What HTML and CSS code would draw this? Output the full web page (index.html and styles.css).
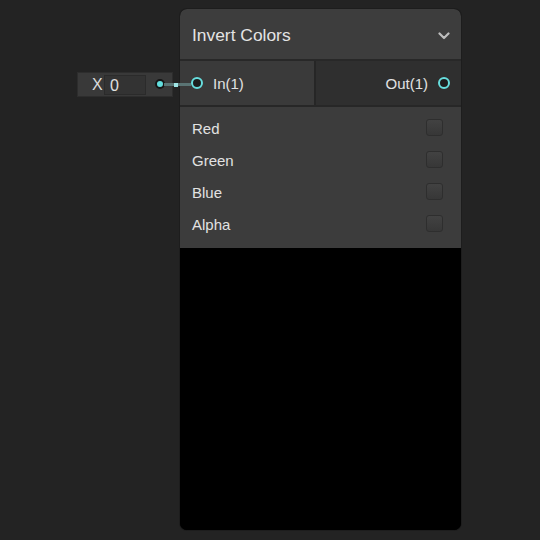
FILE: index.html
```html
<!DOCTYPE html>
<html>
<head>
<meta charset="utf-8">
<link rel="stylesheet" href="styles.css">
</head>
<body>
<div class="canvas">
  <div class="value-node">
    <span class="axis">X</span>
    <span class="field">0</span>
    <span class="out-dot"></span>
  </div>
  <div class="node">
    <div class="header">
      <span class="title">Invert Colors</span>
      <svg class="chevron" width="12" height="8" viewBox="0 0 12 8"><path d="M1.5 1.5 L6 6 L10.5 1.5" fill="none" stroke="#bdbdbd" stroke-width="2.2" stroke-linecap="round" stroke-linejoin="round"/></svg>
    </div>
    <div class="ports">
      <div class="port-in"><span class="ring"></span><span>In(1)</span></div>
      <div class="port-out"><span>Out(1)</span><span class="ring"></span></div>
    </div>
    <div class="options">
      <div class="opt"><span>Red</span><span class="check"></span></div>
      <div class="opt"><span>Green</span><span class="check"></span></div>
      <div class="opt"><span>Blue</span><span class="check"></span></div>
      <div class="opt"><span>Alpha</span><span class="check"></span></div>
    </div>
    <div class="preview"></div>
  </div>
  <div class="wire"><span class="wire-knot"></span></div>
</div>
</body>
</html>
```
FILE: styles.css
```css
html, body {
  margin: 0;
  padding: 0;
  background: #232323;
}
.canvas {
  position: relative;
  width: 540px;
  height: 540px;
  overflow: hidden;
  background: #232323;
  font-family: "Liberation Sans", Arial, sans-serif;
  color: #e2e2e2;
}
.value-node {
  position: absolute;
  left: 77px;
  top: 72px;
  width: 96px;
  height: 25px;
  box-sizing: border-box;
  background: #393939;
  border: 1px solid #2d2d2d;
  display: flex;
  align-items: center;
  font-size: 16px;
}
.axis {
  margin-left: 14px;
  width: 11px;
  color: #dcdcdc;
}
.field {
  margin-left: 1px;
  width: 42px;
  height: 20px;
  box-sizing: border-box;
  background: #333333;
  border: 1px solid #2b2b2b;
  padding-left: 5px;
  line-height: 20px;
  color: #e0e0e0;
}
.out-dot {
  position: absolute;
  left: 77px;
  top: 6px;
  width: 6px;
  height: 6px;
  border-radius: 50%;
  background: #62dede;
  border: 2px solid #161616;
}
.wire {
  position: absolute;
  z-index: 2;
  left: 164px;
  top: 83px;
  width: 27px;
  height: 3px;
  background: #5a7474;
}
.wire-knot {
  position: absolute;
  left: 10px;
  top: -0.5px;
  width: 4px;
  height: 4px;
  background: #9fe6e6;
}
.node {
  position: absolute;
  left: 180px;
  top: 9px;
  width: 281px;
  height: 521px;
  border-radius: 7px;
  overflow: hidden;
  display: flex;
  flex-direction: column;
  background: #000;
  box-shadow: 0 0 0 1px #1d1d1d;
}
.header {
  height: 50px;
  flex: none;
  background: #3d3d3d;
  border-bottom: 2px solid #282828;
  display: flex;
  align-items: center;
  justify-content: space-between;
  padding: 0 11px 0 12px;
}
.title {
  font-size: 17.4px;
  color: #e4e4e4;
  margin-top: 2px;
}
.chevron {
  margin-top: 3px;
}
.ports {
  height: 44px;
  flex: none;
  display: flex;
  border-bottom: 2px solid #272727;
  font-size: 15px;
}
.port-in {
  width: 136px;
  background: #3a3a3a;
  border-right: 2px solid #262626;
  display: flex;
  align-items: center;
  gap: 10px;
  padding-left: 11px;
  box-sizing: border-box;
}
.port-out {
  flex: 1;
  background: #2f2f2f;
  display: flex;
  align-items: center;
  justify-content: flex-end;
  gap: 10px;
  padding-right: 11px;
}
.ring {
  width: 8px;
  height: 8px;
  border-radius: 50%;
  border: 2px solid #67dede;
  background: #1e1e1e;
}
.options {
  flex: none;
  height: 141px;
  box-sizing: border-box;
  background: #3c3c3c;
  padding: 5px 18px 8px 12px;
  font-size: 15px;
}
.opt {
  height: 32px;
  display: flex;
  align-items: center;
  justify-content: space-between;
}
.opt > span:first-child {
  margin-top: 1px;
}
.check {
  width: 17px;
  height: 17px;
  box-sizing: border-box;
  border-radius: 3px;
  background: linear-gradient(#424242, #373737);
  border: 1px solid #2e2e2e;
  margin-top: -1px;
}
.preview {
  flex: 1;
  background: #000;
}
```
